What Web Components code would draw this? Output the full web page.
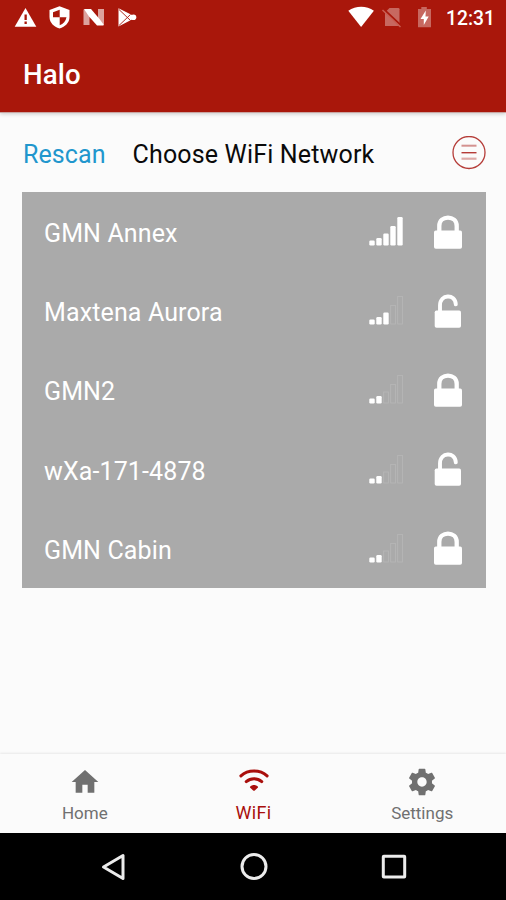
<!DOCTYPE html>
<html lang="en">
<head>
<meta charset="utf-8">
<title>Halo</title>
<style>
html,body{margin:0;height:100%}
body{font-family:Roboto,"Liberation Sans",sans-serif;background:#fbfbfb;overflow:hidden}
</style>
</head>
<body>
<halo-app></halo-app>
<script>
const define = (name, html) => customElements.define(name, class extends HTMLElement {
  constructor() {
    super();
    this.attachShadow({mode: 'open'}).innerHTML = typeof html === 'function' ? html(this) : html;
  }
});

define('status-bar', `
<style>
:host{display:flex;height:36px;box-sizing:border-box;padding:0 11px 0 14px;justify-content:space-between;align-items:center;color:#fff}
svg{display:block}
.g{display:flex;align-items:center}
.t{font-size:19.3px;font-weight:500;line-height:36px;margin-left:13px;padding-top:1px}
</style>
<div class="g">
  <svg width="124" height="36" viewBox="14 0 124 36" fill="#fff">
    <path d="M25.500 8 36.300 26.700H14.700z"/><path d="M24.500 14.500h2.300v5.500h-2.300zM24.500 21.500h2.300v2.400h-2.300z" fill="#a9170b"/>
    <path d="M59.500 6.200 69.500 10v7c0 5.500-4.200 9.800-10 11.600-5.800-1.800-10-6.100-10-11.600v-7z"/>
    <path d="M59.700 9.800V17.200H53V12.300zM59.700 17.200H66.500C65.800 21.200 63.300 24 59.700 25.200z" fill="#a9170b"/>
    <path d="M83.500 9.500h6V25h-6zM98 9h6v16h-6z" opacity=".6"/><path d="M84 9h7l8.500 10 4 5.500v1H97L89 16.500z"/>
    <path d="M118.500 8.200 132 15v4.600l-13.500 7z"/><path d="M119 9.500l11.500 11M119 25.500l11.500-11" stroke="#a9170b" stroke-width=".9"/>
    <circle cx="133.500" cy="17.300" r="2.800"/>
  </svg>
</div>
<div class="g">
  <svg width="86" height="36" viewBox="347 0 86 36" fill="#fff">
    <path d="M348.300 10.700c7.500-5.300 18.300-5.300 25.600 0L361.100 27z"/>
    <path d="M389.500 8h8.800q1.200 0 1.200 1.200V26H385V12.500z" opacity=".35"/>
    <path d="M384.500 10 401 25.500" stroke="#a9170b" stroke-width="2"/><path d="M382.500 10 400.500 27" stroke="#c95d52" stroke-width="1.500"/>
    <path d="M418 9h3.300V7h5.500v2h4.200v18.300h-13z" opacity=".35"/>
    <path d="M425.800 10.500 420.500 19h3.300v6l4.900-8.500h-3.200z"/>
  </svg>
  <span class="t">12:31</span>
</div>`);

define('app-header', `
<style>
:host{display:block;height:112px;background:#a9170b;border-bottom:1px solid #c9a5a2;box-shadow:0 1px 4px rgba(0,0,0,.2);color:#fff}
h1{margin:0;padding-left:23px;font-size:27.700px;font-weight:500;line-height:77px;height:76px;letter-spacing:.1px}
</style><status-bar></status-bar><h1><slot></slot></h1>`);

define('list-toolbar', `
<style>
:host{display:flex;height:79px;align-items:center;padding:0 20.500px 0 23px;font-size:25px;line-height:30px;color:#0a0a0a}
.r{color:#2196cd;width:109.500px;letter-spacing:.1px}
.c{flex:1;white-space:nowrap;letter-spacing:.17px}
.r,.c{padding-top:4px}
svg{display:block}
</style>
<span class="r">Rescan</span><span class="c">Choose WiFi Network</span>
<svg width="34" height="34" viewBox="0 0 34 34" fill="none" stroke="#b53c38"><circle cx="17" cy="16.500" r="16" stroke-width="1.300"/><path d="M9.500 16.700h15" stroke-width="1.400"/><path d="M9.500 9.700h15" stroke-width="2" opacity=".55"/><path d="M9.500 22.700h15" stroke-width="2.200" opacity=".42"/></svg>`);

define('signal-bars', el => {
  const level = +el.getAttribute('level');
  const h = [5, 7.5, 12, 19.5, 28.5];
  return `<style>:host{display:block;width:34px;height:30px}svg{display:block}</style>
  <svg width="34" height="30">${h.map((v, i) => i < level
    ? `<rect x="${i*7+.3}" y="${29.5-v}" width="5.400" height="${v}" rx="1.200" fill="#fff"/>`
    : `<rect x="${i*7+.7}" y="${30-v}" width="4.800" height="${v-1}" fill="none" stroke="#b6b6b6" stroke-width=".9"/>`).join('')}</svg>`;
});

define('lock-icon', el => `<style>:host{display:block;width:28px;height:34px}svg{display:block}</style>
  <svg width="28" height="34" fill="#fff">${el.hasAttribute('open')
    ? '<rect x=".7" y="16.500" width="26.300" height="17.300" rx="1.800"/><path d="M6 18V11.500C6 0 21.300-.5 21.800 10.300" fill="none" stroke="#fff" stroke-width="3.900" stroke-linecap="round"/>'
    : '<rect x="0" y="15.500" width="28" height="18.300" rx="1.800"/><path d="M5.300 17V11C5.300-.2 22.700-.2 22.700 11V17" fill="none" stroke="#fff" stroke-width="4.300"/>'}</svg>`);

define('network-row', el => `
<style>
:host{display:flex;height:79.200px;align-items:center;padding:0 23.500px 0 22px;color:#fff;font-size:25px;line-height:30px;letter-spacing:.13px}
.n{flex:1;padding-top:5px}
signal-bars{margin-right:31px;margin-bottom:1px}
</style><span class="n"><slot></slot></span>
<signal-bars level="${el.getAttribute('level')}"></signal-bars><lock-icon ${el.hasAttribute('open') ? 'open' : ''}></lock-icon>`);

define('network-list', `<style>:host{display:block;margin:0 20.500px 0 22px;background:#aaa}</style><slot></slot>`);

define('tab-item', el => `
<style>
:host{display:flex;flex:1;flex-direction:column;align-items:center;color:#707070;font-size:17px;line-height:20px;padding:12px 0 0 1px}
:host([active]){color:#a90f0c;font-size:18px;letter-spacing:.3px}
svg{display:block;height:32px;width:32px;margin-bottom:5px}
:host([active]) svg{margin-bottom:4.500px}
</style>
<svg viewBox="0 0 24 24" fill="currentColor">${{
  home: '<path d="M10 20v-6h4v6h5v-8h3L12 3 2 12h3v8z"/>',
  wifi: '<g fill="none" stroke="currentColor" stroke-width="2.300" stroke-linecap="round"><path d="M2.200 7.400C7.400 2.600 16.600 2.600 21.800 7.400M6.200 11.700c3.400-2.900 8.200-2.900 11.600 0"/></g><path d="M9.200 15.400c1.700-1.500 3.900-1.500 5.600 0q.5.500 0 1L12.600 18.300q-.6.500-1.200 0L9.200 16.400q-.5-.5 0-1z"/>',
  settings: '<path d="M19.430 12.980c.04-.32.070-.64.070-.98s-.03-.66-.07-.98l2.110-1.650c.19-.15.240-.42.120-.64l-2-3.460c-.12-.22-.39-.3-.61-.22l-2.490 1c-.52-.4-1.080-.73-1.690-.98l-.38-2.650C14.460 2.180 14.250 2 14 2h-4c-.25 0-.46.180-.49.420l-.38 2.650c-.61.250-1.170.59-1.690.98l-2.490-1c-.23-.09-.49 0-.61.220l-2 3.460c-.13.220-.07.490.120.640l2.110 1.650c-.04.320-.07.650-.07.980s.03.660.070.980l-2.110 1.650c-.19.150-.24.420-.12.640l2 3.460c.12.220.39.300.61.220l2.490-1c.52.400 1.080.730 1.690.980l.38 2.650c.03.240.24.420.49.420h4c.25 0 .46-.18.490-.42l.38-2.650c.61-.25 1.170-.59 1.690-.98l2.490 1c.23.090.49 0 .61-.22l2-3.460c.12-.22.070-.49-.12-.64l-2.110-1.650zM12 15.500c-1.930 0-3.500-1.570-3.500-3.500s1.570-3.500 3.500-3.500 3.500 1.570 3.500 3.500-1.570 3.500-3.500 3.500z"/>'
}[el.getAttribute('icon')]}</svg><span><slot></slot></span>`);

define('tab-bar', `<style>:host{display:flex;height:79px;background:#fbfbfb;box-shadow:0 -1px 2px rgba(0,0,0,.08)}</style><slot></slot>`);

define('system-nav', `
<style>:host{display:flex;height:67px;background:#000;justify-content:center;align-items:center;gap:112px;padding-left:1.500px;box-sizing:border-box}svg{display:block}</style>
${['<path d="M3.500 14 23 2.500v23z" stroke-linejoin="round"/>', '<circle cx="14" cy="13.500" r="12"/>', '<rect x="3.300" y="3.300" width="21.400" height="20.800" rx=".5"/>']
  .map(s => `<svg width="28" height="28" fill="none" stroke="#ececec" stroke-width="3">${s}</svg>`).join('')}`);

define('halo-app', `
<style>:host{display:flex;flex-direction:column;height:900px;width:506px;background:#fbfbfb}main{flex:1}</style>
<app-header>Halo</app-header>
<main>
  <list-toolbar></list-toolbar>
  <network-list>
    <network-row level="5">GMN Annex</network-row>
    <network-row level="3" open>Maxtena Aurora</network-row>
    <network-row level="2">GMN2</network-row>
    <network-row level="2" open>wXa-171-4878</network-row>
    <network-row level="2">GMN Cabin</network-row>
  </network-list>
</main>
<tab-bar>
  <tab-item icon="home">Home</tab-item>
  <tab-item icon="wifi" active>WiFi</tab-item>
  <tab-item icon="settings">Settings</tab-item>
</tab-bar>
<system-nav></system-nav>`);
</script>
</body>
</html>
